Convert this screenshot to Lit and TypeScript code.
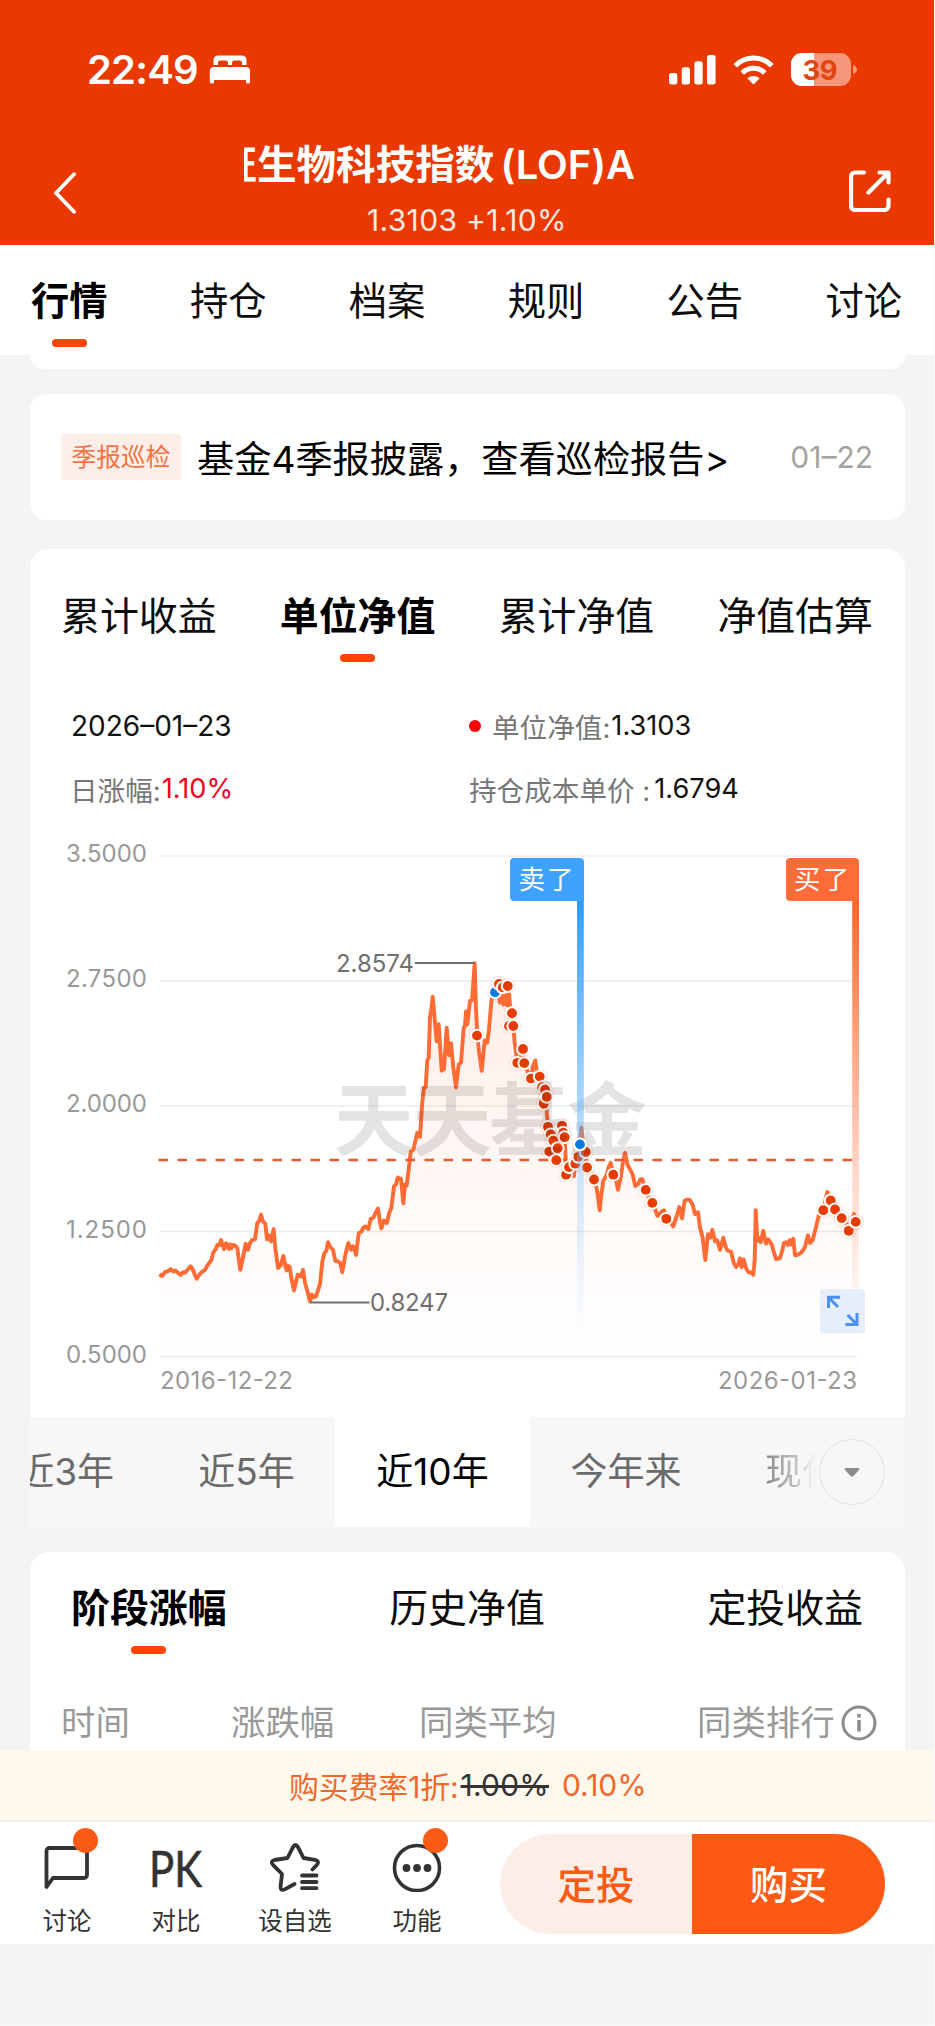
import { LitElement, html, css, svg } from "lit";
import { customElement, property } from "lit/decorators.js";
import { classMap } from "lit/directives/class-map.js";

const LEFT: number[][] = [
  [28,1262],[36,1266],[45,1255],[54,1252],[62,1246],[70,1253],[76,1250],[84,1257],[92,1263],[99,1255],[106,1256],[114,1246],[122,1238],[130,1250],[134,1262],[140,1274],[148,1262],[156,1254],[165,1248],[172,1236],[178,1228],[184,1220],[190,1198],[197,1188],[202,1176],[208,1176],[213,1162],[218,1178],[222,1188],[228,1171],[236,1187],[240,1174],[244,1186],[249,1176],[256,1178],[262,1185],[266,1215],[271,1248],[279,1212],[287,1172],[294,1190],[300,1170],[306,1162],[315,1160],[322,1112],[328,1105],[333,1088],[339,1108],[346,1114],[351,1160],[357,1148],[363,1166],[371,1130],[376,1185],[384,1243],[392,1236],[400,1208],[406,1236],[410,1250],[414,1236],[419,1240],[424,1272],[432,1308],[438,1282],[443,1262],[452,1268],[459,1248],[465,1285],[472,1310],[480,1340],[486,1320],[492,1328],[498,1325],[510,1290],[517,1225],[523,1200],[529,1194],[534,1168],[541,1182],[549,1190],[556,1222],[564,1224],[571,1228],[577,1255],[586,1205],[595,1170],[603,1190],[609,1180],[613,1186],[618,1205],[626,1142],[634,1138],[640,1126],[646,1122],[655,1130],[662,1100],[670,1097],[677,1082],[684,1070],[690,1110],[694,1128],[702,1105],[711,1112],[717,1085],[724,1068],[732,1006],[738,1000],[743,980],[753,984],[760,1055],[765,1000],[770,1003],[777,950],[782,905],[790,900],[796,875],[802,850],[810,862],[817,760],[822,720],[827,718],[832,640],[836,632],[840,515],[844,490],[848,455],[854,520],[860,585],[866,535],[871,610],[875,670],[882,665],[890,545],[897,625],[903,590],[910,660],[918,718],[926,652],[933,646],[941,545],[945,540],[948,498],[952,535],[960,467],[966,465],[974,358],[978,490],[982,568],[988,620],[995,670],[1004,582],[1012,588],[1017,550],[1024,470],[1030,442],[1035,425],[1044,418],[1049,472],[1055,420],[1060,478],[1066,430],[1071,480],[1076,430],[1080,482],[1085,503],[1090,540],[1094,590],[1102,642],[1110,640],[1118,608],[1122,650],[1135,676],[1143,692],[1148,660],[1156,640],[1160,672],[1169,688],[1176,718],[1185,726],[1189,748],[1190,790],
];
const RIGHT: number[][] = [
  [264,833],[272,855],[275,900],[280,873],[289,930],[293,895],[300,860],[306,830],[314,863],[317,930],[318,970],[327,948],[338,950],[342,976],[346,938],[355,920],[364,836],[370,890],[377,906],[381,950],[392,968],[402,985],[410,1012],[415,1045],[419,1075],[424,1030],[430,990],[440,972],[446,950],[452,937],[460,972],[468,985],[474,1016],[482,980],[489,935],[495,909],[503,944],[512,960],[518,972],[526,1005],[535,998],[541,985],[547,985],[557,1016],[567,1040],[577,1054],[586,1074],[592,1091],[602,1082],[612,1075],[619,1100],[630,1108],[640,1122],[650,1092],[658,1066],[666,1099],[674,1047],[682,1044],[690,1046],[698,1060],[705,1086],[714,1081],[720,1125],[728,1155],[736,1220],[744,1145],[751,1155],[757,1132],[765,1165],[772,1163],[780,1190],[790,1155],[797,1182],[803,1192],[813,1195],[821,1228],[828,1240],[834,1234],[840,1215],[845,1240],[851,1218],[859,1245],[866,1256],[874,1256],[880,1262],[884,1220],[887,1075],[892,1164],[897,1155],[902,1168],[910,1135],[918,1172],[925,1160],[935,1175],[942,1198],[948,1217],[960,1214],[966,1195],[972,1170],[980,1168],[984,1176],[990,1162],[995,1175],[1000,1158],[1005,1206],[1014,1204],[1024,1198],[1034,1184],[1044,1148],[1050,1170],[1058,1162],[1066,1132],[1076,1092],[1090,1075],[1102,1022],[1112,1047],[1125,1073],[1145,1098],[1156,1106],[1166,1135],[1174,1110],[1182,1086],[1187,1109],
];
const BUYS: number[][] = [
  [51,568],[117,418],[128,428],[143,424],[156,503],[147,540],[160,540],[189,607],[172,647],[193,648],[213,693],[239,687],[246,718],[255,725],[251,766],[260,746],[264,833],[272,855],[280,873],[268,905],[293,895],[289,930],[306,830],[310,850],[314,863],[318,972],[327,950],[346,940],[355,920],[377,906],[381,951],[402,986],[460,972],[557,1016],[577,1054],[619,1100],[1090,1075],[1112,1047],[1125,1073],[1145,1098],[1166,1135],[1187,1109],
];
const SELLS: number[][] = [[105,442],[360,884]];

const sx = (v: number) => +(460 + v / 3).toFixed(1);
const sy = (v: number) => +(840 + v / 2.904).toFixed(1);
const LINE = [...LEFT.map(([x, y]) => [x - 930, y]), ...RIGHT]
  .map(([x, y]) => `${sx(x)},${sy(y)}`)
  .join(" ");

@customElement("nav-chart")
export class NavChart extends LitElement {
  static styles = css`
    :host { display: block; height: 577px; }
    svg { display: block; width: 875px; height: 577px; font-family: Inter, "Noto Sans CJK SC", sans-serif; }
    .grid { stroke: #ececec; stroke-width: 1.4; }
    .axis { fill: #999; font-size: 24px; }
    .mark { fill: #707070; font-size: 24px; }
    .lead { stroke: #707070; stroke-width: 2; }
    .line { fill: none; stroke: #ff6b35; stroke-width: 3.9; stroke-linejoin: round; }
    .cost { stroke: #e8592c; stroke-width: 2.4; stroke-dasharray: 9.5 9.5; }
    .water { fill: #000; fill-opacity: .11; font-size: 80px; font-weight: 700; }
    .flag { fill: #fff; font-size: 26.5px; }
    .arrow { fill: none; stroke: #4a8df5; stroke-width: 2.9; }
  `;

  private dot([x, y]: number[], color: string) {
    return svg`<circle cx=${sx(x)} cy=${sy(y)} r="7.9" fill="#ff6b35" fill-opacity=".16"></circle>
      <circle cx=${sx(x)} cy=${sy(y)} r="6.9" fill="#fff"></circle>
      <circle cx=${sx(x)} cy=${sy(y)} r="4.9" fill=${color}></circle>`;
  }

  render() {
    const rows: [string, number][] = [["3.5000", 856], ["2.7500", 981], ["2.0000", 1106], ["1.2500", 1231.5], ["0.5000", 1356.5]];
    return html`<svg viewBox="30 840 875 577">
      <defs>
        <linearGradient id="area" x1="0" y1="963" x2="0" y2="1356" gradientUnits="userSpaceOnUse">
          <stop offset="0" stop-color="#ff6b35" stop-opacity=".12"></stop>
          <stop offset=".5" stop-color="#ff6b35" stop-opacity=".055"></stop>
          <stop offset="1" stop-color="#ff6b35" stop-opacity="0"></stop>
        </linearGradient>
        <linearGradient id="sell" x1="0" y1="901" x2="0" y2="1340" gradientUnits="userSpaceOnUse">
          <stop offset="0" stop-color="#2d9cff"></stop>
          <stop offset=".68" stop-color="#6bb9ff" stop-opacity=".27"></stop>
          <stop offset="1" stop-color="#8ac6ff" stop-opacity="0"></stop>
        </linearGradient>
        <linearGradient id="buy" x1="0" y1="901" x2="0" y2="1330" gradientUnits="userSpaceOnUse">
          <stop offset="0" stop-color="#ff6329"></stop>
          <stop offset=".65" stop-color="#ff7a4a" stop-opacity=".28"></stop>
          <stop offset="1" stop-color="#ff8a5c" stop-opacity="0"></stop>
        </linearGradient>
      </defs>
      ${rows.map(([label, y]) => svg`
        <line class="grid" x1="160" x2="857" y1=${y} y2=${y}></line>
        <text class="axis" x="66" y=${y + 6} textLength="81">${label}</text>`)}
      <polygon points="159.3,1356 ${LINE} 856,1356" fill="url(#area)"></polygon>
      <polyline class="line" points=${LINE}></polyline>
      <line class="cost" x1="158.500" x2="852" y1="1160" y2="1160"></line>
      <line class="lead" x1="415" x2="474.5" y1="963" y2="963"></line>
      <text class="mark" x="336" y="972" textLength="78">2.8574</text>
      <line class="lead" x1="310" x2="369.5" y1="1302.5" y2="1302.5"></line>
      <text class="mark" x="370" y="1311" textLength="78">0.8247</text>
      ${this.dot(SELLS[0], "#0a7be0")}
      ${BUYS.map((p) => this.dot(p, "#e63c00"))}
      <text class="water" x="334" y="1149" textLength="313">天天基金</text>
      <rect x="577" y="901" width="6.8" height="440" fill="url(#sell)"></rect>
      <rect x="852.2" y="901" width="6.8" height="430" fill="url(#buy)"></rect>
      ${this.dot(SELLS[1], "#0a7be0")}
      ${this.dot(BUYS[BUYS.length - 1], "#e63c00")}
      <path d="M514 858h66a4 4 0 0 1 4 4v39h-70a4 4 0 0 1-4-4v-35a4 4 0 0 1 4-4z" fill="#3da3ff"></path>
      <text class="flag" x="518.500" y="889" textLength="55">卖了</text>
      <path d="M790 858h65a4 4 0 0 1 4 4v39h-69a4 4 0 0 1-4-4v-35a4 4 0 0 1 4-4z" fill="#ff6c39"></path>
      <text class="flag" x="794" y="889" textLength="55">买了</text>
      <rect x="820" y="1289" width="45" height="44.5" rx="4" fill="#e3ecfc" fill-opacity=".88"></rect>
      <path class="arrow" d="M828.5 1308v-10.700h11.500M829 1298l9 9M857 1313v11.500h-11.500M856.500 1324l-9-9"></path>
      <text class="axis" x="160" y="1389" textLength="133">2016-12-22</text>
      <text class="axis" x="718" y="1389" textLength="139">2026-01-23</text>
    </svg>`;
  }
}

@customElement("tab-row")
export class TabRow extends LitElement {
  @property({ attribute: false }) items: string[] = [];
  @property({ type: Number }) active = 0;
  static styles = css`
    :host { display: flex; justify-content: space-between; font-size: 38.9px; line-height: 56px; color: #0c0c0c; }
    .tab { display: flex; flex-direction: column; align-items: center; white-space: nowrap; }
    .on { font-weight: 700; color: #000; }
    .on::after { content: ""; width: 35px; height: 8px; border-radius: 4px; background: #ff4400; margin-top: 10px; }
  `;
  render() {
    return this.items.map((t, i) => html`<span class=${classMap({ tab: true, on: i === this.active })}>${t}</span>`);
  }
}

@customElement("app-root")
export class AppRoot extends LitElement {
  static styles = css`
    :host { display: block; width: 935px; height: 2026px; overflow: hidden; background: #fafafa; font-family: Inter, "Noto Sans CJK SC", sans-serif; color: #111; }
    * { box-sizing: border-box; }
    svg { display: block; flex: none; }
    .page { width: 934px; height: 2025px; background: #f4f4f4; display: flex; flex-direction: column; white-space: nowrap; overflow: hidden; }
    .top { height: 245px; background: #e93901; color: #fff; flex: none; }
    .status { height: 139px; padding: 0 77px 0 87px; display: flex; align-items: center; }
    .clock { font-size: 40px; font-weight: 600; letter-spacing: -.8px; margin-right: 11px; width: 111px; }
    .sp { flex: 1; }
    .status .sig { margin-right: 17px; }
    .status .wifi { margin-right: 17px; }
    .bar { height: 106px; display: flex; padding: 0 44px 0 53px; }
    .back { margin-top: 33px; }
    .share { margin-top: 31px; }
    .mid { width: 391px; margin: 0 214px 0 167px; }
    .mid { display: flex; flex-direction: column; }
    .name { overflow: hidden; height: 52px; line-height: 52px; display: flex; justify-content: flex-end; font-size: 38px; font-weight: 700; }
    .name .zh { font-size: 39.6px; }
    .name .en { font-size: 40px; font-weight: 600; margin-left: 6px; letter-spacing: -.1px; }
    .quote { margin-top: 11px; font-size: 30px; line-height: 36px; padding-left: 123px; color: #ffe9e0; letter-spacing: .35px; }
    .tabs { height: 110px; background: #fff; padding: 28px 32px 0 31px; flex: none; }
    .tabs tab-row { font-size: 38.3px; }
    .stub { margin: 0 29px 0 30px; height: 14px; background: #fff; border-radius: 0 0 14px 14px; flex: none; }
    .card { margin-left: 30px; width: 875px; background: #fff; flex: none; }
    .report { margin-top: 25px; height: 126px; border-radius: 16px; padding: 0 32px 0 31px; display: flex; align-items: center; }
    .tag { height: 46px; line-height: 46px; width: 120px; text-align: center; background: #fdeeea; color: #f4733f; border-radius: 4px; font-size: 24.7px; }
    .report .msg { font-size: 37.2px; margin-left: 16px; color: #000; }
    .report .date { margin-left: auto; font-size: 30px; color: #a3a3a3; }
    .main { margin-top: 29px; height: 868px; border-radius: 18px 18px 0 0; }
    .main tab-row { padding: 39px 32px 0 31px; height: 145px; }
    .info { height: 146px; display: grid; grid-template: 63px 63px / 397px 1fr; padding: 0 42px 0 41px; align-items: center; font-size: 28px; }
    .info div { display: flex; align-items: center; }
    .k { color: #777; font-size: 27.6px; }
    .day { margin-left: -1px; }
    .cost { margin-left: 1px; }
    .v { font-size: 27.2px; margin-left: 1px; }
    .v2 { margin-left: 4px; }
    .red { color: #f5001c; }
    .pip { width: 12px; height: 12px; border-radius: 50%; background: #fb0007; margin: 0 11px 0 1px; }
    .ranges { margin-left: 30px; width: 875px; height: 110px; background: #f7f7f7; display: flex; overflow: hidden; font-size: 37px; line-height: 110px; color: #6a6a6a; flex: none; }
    .r { flex: none; text-align: center; }
    .r3 { width: 113px; display: flex; justify-content: flex-end; padding-right: 29px; }
    .r5 { width: 192px; padding-left: 15px; }
    .r10 { width: 195px; background: #fff; color: #000; }
    .rt { width: 192px; }
    .now { width: 94px; text-align: left; padding-left: 43px; overflow: hidden; background: linear-gradient(90deg, #8a8a8a 42px, #bbb 72px, #f0f0f0 90px); -webkit-background-clip: text; background-clip: text; color: transparent; }
    .more { width: 66px; height: 66px; border: 1.5px solid #e2e2e2; border-radius: 50%; margin: 22px 0 0 3px; display: flex; align-items: center; justify-content: center; flex: none; }
    .stage { margin-top: 25px; height: 198px; border-radius: 20px 20px 0 0; overflow: hidden; }
    .stage tab-row { padding: 28px 42px 0 41px; height: 143px; }
    .head { display: grid; grid-template-columns: 170px 188px 278px 1fr; padding-left: 31px; color: #999; font-size: 34.4px; line-height: 56px; }
    .head div { display: flex; align-items: center; }
    .head svg { margin-left: 6px; }
    .fee { height: 72px; background: #fef9ec; border-bottom: 2px solid #f1f0ee; display: flex; align-items: center; padding-left: 289px; font-size: 30px; color: #f4672b; flex: none; }
    .zk { font-size: 29.9px; letter-spacing: -.1px; }
    .old { color: #333; text-decoration: line-through; text-decoration-thickness: 2.5px; margin: 0 13px 0 2px; letter-spacing: .2px; }
    .dock { height: 123px; background: #fff; display: flex; flex: none; padding-top: 12px; border-bottom: 1px solid #f0f0f0; }
    .act { position: relative; display: flex; flex-direction: column; align-items: center; font-size: 24.5px; line-height: 32px; color: #333; }
    .act svg { margin-bottom: 13px; }
    .a1 { width: 134px; } .a2 { width: 84px; } .a3 { width: 154px; } .a4 { width: 90px; }
    .badge { position: absolute; width: 25px; height: 25px; border-radius: 50%; background: #fb5b14; top: -6px; }
    .b1 { left: 73px; } .b4 { left: 51px; }
    .cta { margin-left: 38px; width: 385px; height: 100px; border-radius: 50px; overflow: hidden; display: grid; grid-template-columns: 192px 1fr; text-align: center; line-height: 102px; font-size: 38.5px; font-weight: 500; }
    .inv { background: #fdede7; color: #f95a15; }
    .buy { background: #fc5a14; color: #fff; }
  `;

  render() {
    return html`<div class="page">
      <div class="top">
        <div class="status">
          <span class="clock">22:49</span>
          <svg width="42" height="29" viewBox="0 0 42 29" fill="#fff"><path d="M4.500 10V5a4.500 4.500 0 0 1 4.500-4.500h24a4.500 4.500 0 0 1 4.500 4.500v5h-4.500V8a2.500 2.500 0 0 0-2.500-2.500h-5A2.500 2.500 0 0 0 23 8v2h-4V8a2.500 2.500 0 0 0-2.500-2.500h-5A2.500 2.500 0 0 0 9 8v2z"/><path d="M5 12h32q4 0 4 4v11q0 1.500-2 1.500t-2-1.500v-2H5v2q0 1.500-2 1.500T.800 27V16q0-4 4.200-4z"/></svg>
          <span class="sp"></span>
          <svg class="sig" width="47" height="30" viewBox="0 0 47 30" fill="#fff"><rect y="18" width="8.300" height="11.500" rx="2.500"/><rect x="12.700" y="12.200" width="8.300" height="17.300" rx="2.500"/><rect x="25.400" y="6.300" width="8.300" height="23.200" rx="2.500"/><rect x="38" y="0" width="8.600" height="29.500" rx="2.500"/></svg>
          <svg class="wifi" width="41" height="30" viewBox="0 0 41 30" fill="none" stroke="#fff" stroke-width="5"><path d="M2.200 10.800a25.500 25.500 0 0 1 36.600 0M9.200 18a15.800 15.800 0 0 1 22.600 0"/><path d="M20.500 29.500l-6.200-6.300q6.200-4.600 12.400 0z" fill="#fff" stroke="none"/></svg>
          <svg width="66" height="33" viewBox="0 0 66 33"><defs><clipPath id="bat"><rect width="60" height="33" rx="11"/></clipPath></defs><g clip-path="url(#bat)"><rect width="60" height="33" fill="#f6977b"/><rect width="23" height="33" fill="#fff"/></g><path d="M62 12q4 1.500 4 4.500t-4 4.500z" fill="#f6977b"/><text x="11.500" y="26.500" textLength="35" font-family="Inter" font-size="27.500" font-weight="700" fill="#e34512">39</text></svg>
        </div>
        <div class="bar">
          <svg class="back" width="24" height="42" viewBox="0 0 24 42" fill="none" stroke="#fff" stroke-width="3.800" stroke-linecap="round" stroke-linejoin="round"><path d="M21 2.200L3 21l18 18.800"/></svg>
          <div class="mid">
            <div class="name"><span class="zh">证生物科技指数</span><span class="en">(LOF)A</span></div>
            <div class="quote">1.3103 +1.10%</div>
          </div>
          <svg class="share" width="42" height="42" viewBox="0 0 42 42" fill="none" stroke="#fff" stroke-width="4.200" stroke-linecap="round" stroke-linejoin="round"><path d="M15 2.500H6a4 4 0 0 0-4 4V36a4 4 0 0 0 4 4h29.500a4 4 0 0 0 4-4v-6.500M30.500 2.500h9v10M39 3L19.500 22.500"/></svg>
        </div>
      </div>
      <div class="tabs"><tab-row .items=${["行情", "持仓", "档案", "规则", "公告", "讨论"]}></tab-row></div>
      <div class="stub"></div>
      <div class="card report"><span class="tag">季报巡检</span><span class="msg">基金4季报披露，查看巡检报告&gt;</span><span class="date">01–22</span></div>
      <div class="card main">
        <tab-row .items=${["累计收益", "单位净值", "累计净值", "净值估算"]} .active=${1}></tab-row>
        <div class="info">
          <div>2026–01–23</div>
          <div><i class="pip"></i><span class="k">单位净值:</span><span class="v">1.3103</span></div>
          <div><span class="k day">日涨幅:</span><span class="v red">1.10%</span></div>
          <div><span class="k cost">持仓成本单价 :</span><span class="v v2">1.6794</span></div>
        </div>
        <nav-chart></nav-chart>
      </div>
      <div class="ranges">
        <span class="r r3">近3年</span><span class="r r5">近5年</span><span class="r r10">近10年</span><span class="r rt">今年来</span><span class="r now">现任</span>
        <span class="more"><svg width="16" height="11" viewBox="0 0 16 11"><path d="M2 1h12q2 0 1 2L9.500 9q-1.500 1.500-3 0L1 3Q0 1 2 1z" fill="#8c8c8c"/></svg></span>
      </div>
      <div class="card stage">
        <tab-row .items=${["阶段涨幅", "历史净值", "定投收益"]}></tab-row>
        <div class="head"><div>时间</div><div>涨跌幅</div><div>同类平均</div><div>同类排行<svg width="36" height="36" viewBox="0 0 36 36" fill="none" stroke="#8c8c8c" stroke-width="3"><circle cx="18" cy="18" r="16"/><path d="M18 15v11.500M18 9v3.500" stroke-width="3.600"/></svg></div></div>
      </div>
      <div class="fee"><span class="zk">购买费率1折:</span><span class="old">1.00%</span>0.10%</div>
      <div class="dock">
        <div class="act a1"><svg width="49" height="58" viewBox="0 0 49 58" fill="none" stroke="#333" stroke-width="3.800" stroke-linejoin="round"><path d="M6 14H41a3 3 0 0 1 3 3V41a3 3 0 0 1-3 3H10L3.500 53V17a3 3 0 0 1 3-3z"/></svg>讨论<i class="badge b1"></i></div>
        <div class="act a2"><svg width="56" height="58" viewBox="0 0 56 58"><text x="1" y="53" font-family="Lato" font-size="49.500" fill="#333" stroke="#333" stroke-width=".6" textLength="53" lengthAdjust="spacingAndGlyphs">PK</text></svg>对比</div>
        <div class="act a3"><svg width="54" height="58" viewBox="0 0 54 58" fill="none" stroke="#333" stroke-width="3.800" stroke-linecap="round" stroke-linejoin="round"><path d="M44.500 35.500l4.200-4.300q3.300-4.200-1.700-5.400L35.500 24 30 13.200q-2.500-4.400-5 0L19.500 24 6.500 26q-4.500 1.200-1.500 4.800L14 40l-1.500 13q.2 4 3.800 2.600L26.500 50"/><path d="M34 41.500h14.500M34 48h14.500M34 54.200h14.500" stroke-width="3.800"/></svg>设自选</div>
        <div class="act a4"><svg width="50" height="58" viewBox="0 0 50 58" fill="none" stroke="#333" stroke-width="3.600"><circle cx="25" cy="34" r="22.500"/><g fill="#333" stroke="none"><circle cx="14.500" cy="34" r="3.900"/><circle cx="25" cy="34" r="3.900"/><circle cx="35.500" cy="34" r="3.900"/></g></svg>功能<i class="badge b4"></i></div>
        <div class="cta"><span class="inv">定投</span><span class="buy">购买</span></div>
      </div>
    </div>`;
  }
}
